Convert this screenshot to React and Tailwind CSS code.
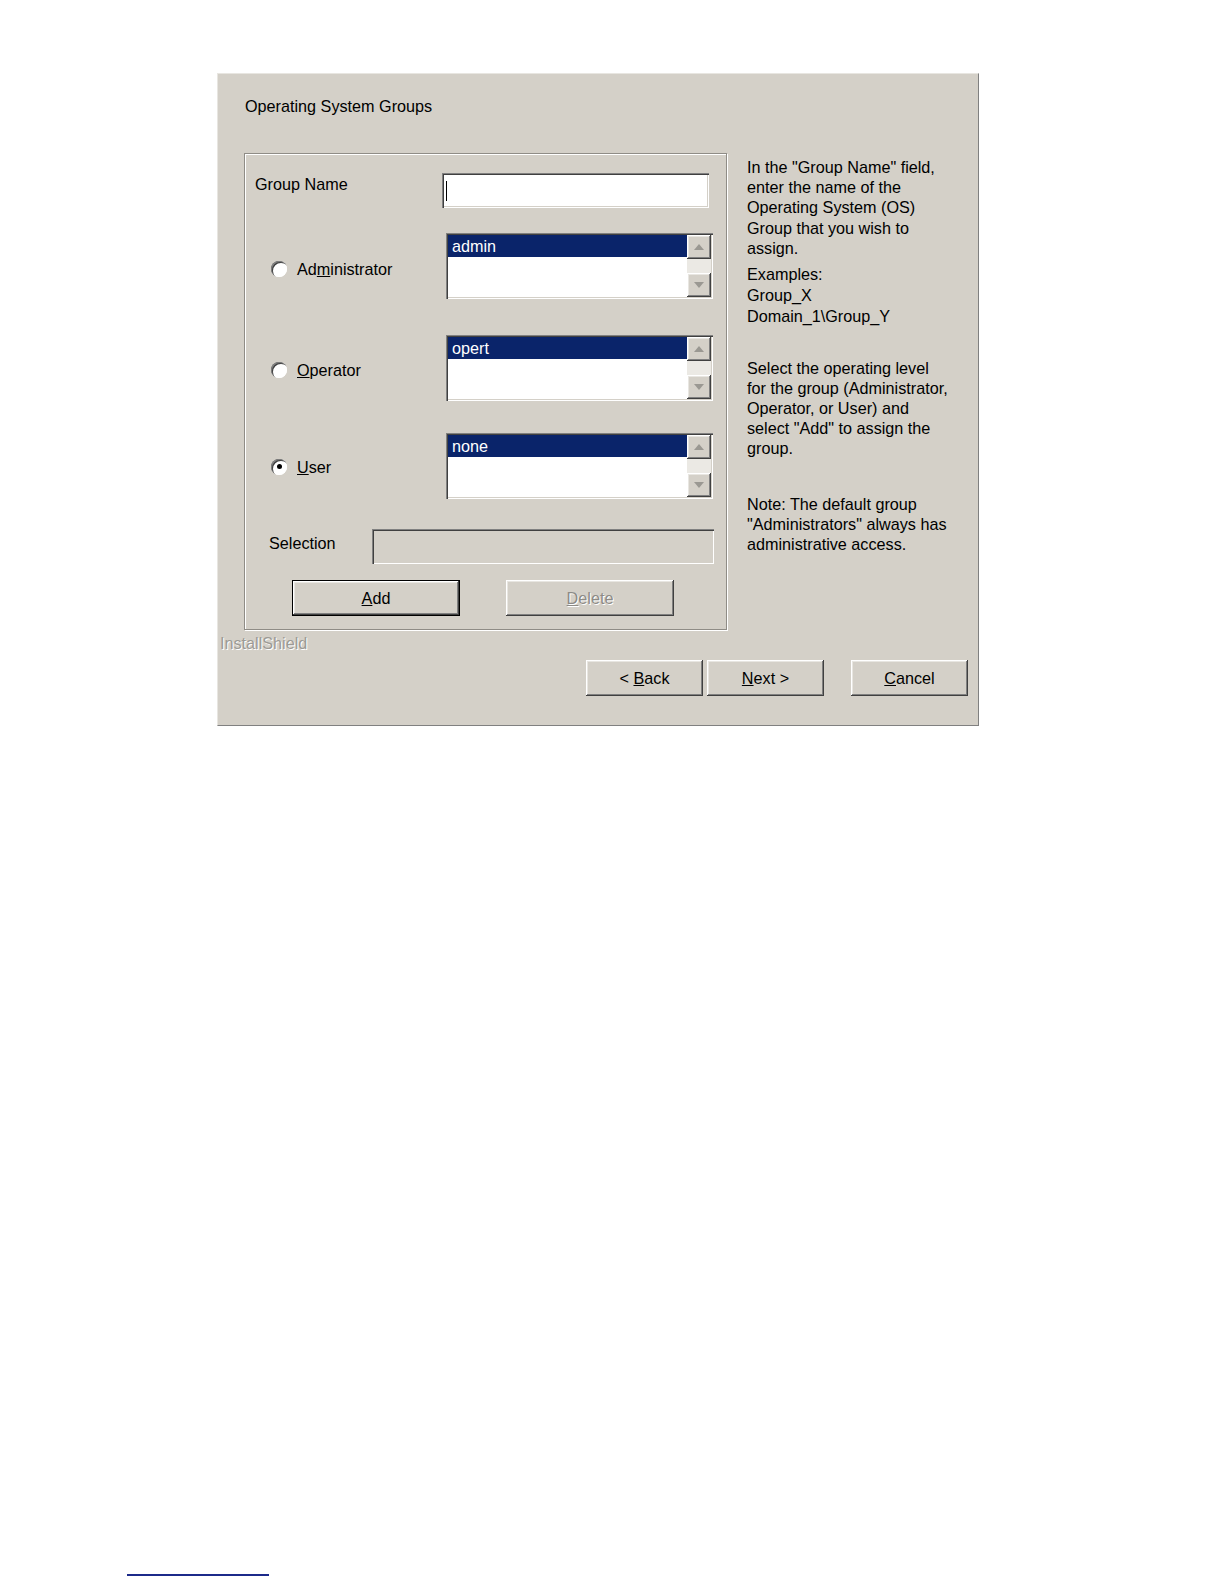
const raised =
  "bg-[#d4d0c8] shadow-[inset_-1px_-1px_0_#404040,inset_1px_1px_0_#ffffff,inset_-2px_-2px_0_#808080,inset_2px_2px_0_#e8e6e1]";
const sunken =
  "shadow-[inset_1px_1px_0_#808080,inset_2px_2px_0_#404040,inset_-1px_-1px_0_#ffffff,inset_-2px_-2px_0_#d4d0c8]";

function Arrow({ up }) {
  return (
    <svg width="10" height="6" viewBox="0 0 10 6">
      <polygon points={up ? "5,0 10,6 0,6" : "0,0 10,0 5,6"} fill="#9a9892" />
    </svg>
  );
}

function ListBox({ value }) {
  return (
    <div className={`w-[267px] h-[66px] bg-white p-[2px] flex ${sunken}`}>
      <div className="flex-1 flex flex-col">
        <div className="h-[22px] bg-[#0a246a] text-white pl-[4px] leading-[22px]">{value}</div>
      </div>
      <div className="w-[24px] flex flex-col bg-[#ebe9e4]">
        <div className={`h-[24px] flex items-center justify-center ${raised}`}>
          <Arrow up />
        </div>
        <div className="flex-1" />
        <div className={`h-[24px] flex items-center justify-center ${raised}`}>
          <Arrow />
        </div>
      </div>
    </div>
  );
}

function Radio({ checked }) {
  return (
    <span className="w-[16px] h-[16px] rounded-full bg-white flex items-center justify-center shadow-[inset_1px_1px_0_#808080,inset_2px_2px_0_#404040,inset_-1px_-1px_0_#ffffff]">
      {checked && <span className="w-[5px] h-[5px] rounded-full bg-black" />}
    </span>
  );
}

function OptionRow({ label, checked, value, mt, shift }) {
  return (
    <div className={`flex items-center ${mt}`}>
      <div className={`w-[191px] flex items-center pl-[16px] gap-[10px] ${shift}`}>
        <Radio checked={checked} />
        <span>{label}</span>
      </div>
      <ListBox value={value} />
    </div>
  );
}

function Button({ children, className = "" }) {
  return (
    <div className={`w-[117px] h-[36px] flex items-center justify-center ${raised} ${className}`}>
      <span className="whitespace-pre">{children}</span>
    </div>
  );
}

export default function App() {
  return (
    <div
      className="bg-white pt-[73px] text-[16.2px] text-black"
      style={{ fontFamily: '"Liberation Sans", Arial, sans-serif' }}
    >
      <div className="ml-[217px] w-[762px] h-[653px] bg-[#d4d0c8] border border-t-[#e8e6e1] border-l-[#e8e6e1] border-b-[#808080] border-r-[#808080] flex flex-col">
        <div className="pt-[22px] pl-[27px] leading-[20px]">Operating System Groups</div>

        <div className="flex mt-[37px] pl-[26px]">
          <div className="w-[483px] h-[477px] border border-[#8f8c86] shadow-[1px_1px_0_#ffffff,inset_1px_1px_0_#ffffff] pl-[10px] flex flex-col">
            <div className="flex items-start mt-[19px]">
              <div className="w-[187px] leading-[20px] mt-[1px]">Group Name</div>
              <div className={`w-[267px] h-[35px] bg-white flex items-center pl-[4px] ${sunken}`}>
                <span className="w-[1px] h-[20px] bg-black" />
              </div>
            </div>

            <OptionRow mt="mt-[25px]" shift="mt-[6px]" value="admin" label={<>Ad<u>m</u>inistrator</>} />
            <OptionRow mt="mt-[36px]" shift="mt-[4px]" value="opert" label={<><u>O</u>perator</>} />
            <OptionRow mt="mt-[32px]" shift="mt-[2px]" value="none" checked label={<><u>U</u>ser</>} />

            <div className="flex items-start mt-[30px]">
              <div className="w-[117px] pl-[14px] leading-[20px] mt-[4px]">Selection</div>
              <div className={`w-[342px] h-[35px] bg-[#d4d0c8] ${sunken}`} />
            </div>

            <div className="flex mt-[16px] pl-[37px] gap-[46px]">
              <div className={`w-[168px] h-[36px] flex items-center justify-center border border-black ${raised}`}>
                <span><u>A</u>dd</span>
              </div>
              <div className={`w-[168px] h-[36px] flex items-center justify-center ${raised}`}>
                <span className="text-[#8d8b86] [text-shadow:1px_1px_0_#ffffff]"><u>D</u>elete</span>
              </div>
            </div>
          </div>

          <div className="ml-[20px] mt-[4px] leading-[20.2px] whitespace-nowrap">
            <div>
              In the "Group Name" field,<br />
              enter the name of the<br />
              Operating System (OS)<br />
              Group that you wish to<br />
              assign.
            </div>
            <div className="mt-[6px] leading-[21.2px]">
              Examples:<br />
              Group_X<br />
              Domain_1\Group_Y
            </div>
            <div className="mt-[30px]">
              Select the operating level<br />
              for the group (Administrator,<br />
              Operator, or User) and<br />
              select "Add" to assign the<br />
              group.
            </div>
            <div className="mt-[35px]">
              Note: The default group<br />
              "Administrators" always has<br />
              administrative access.
            </div>
          </div>
        </div>

        <div className="pl-[2px] mt-[3px] leading-[20px] text-[#9c9a95] [text-shadow:1px_1px_0_#ffffff]">InstallShield</div>

        <div className="flex mt-[7px] pl-[368px]">
          <Button>{"< "}<u>B</u>ack</Button>
          <Button className="ml-[4px]"><u>N</u>ext{" >"}</Button>
          <Button className="ml-[27px]"><u>C</u>ancel</Button>
        </div>
      </div>

      <div className="ml-[127px] mt-[848px] w-[142px] h-[2px] bg-[#1c2a8a]" />
    </div>
  );
}
